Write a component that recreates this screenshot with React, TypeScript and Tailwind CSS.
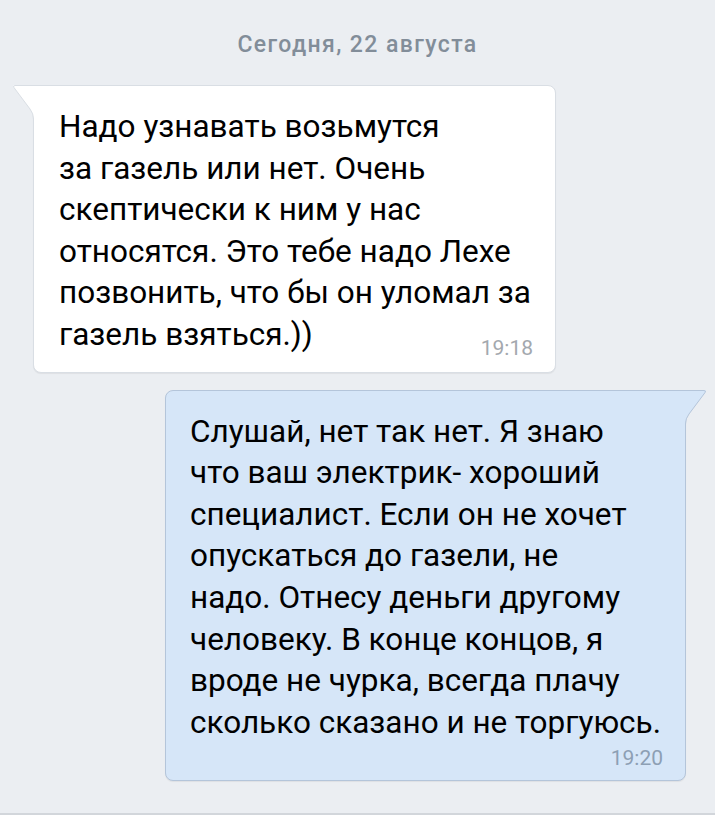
import React from 'react';

type Side = 'in' | 'out';

const Tail: React.FC<{ side: Side }> = ({ side }) => {
  const fill = side === 'in' ? '#ffffff' : '#d6e6f8';
  const stroke = side === 'in' ? '#d9dee4' : '#b4c5da';
  return (
    <svg
      width="26"
      height="34"
      viewBox="0 0 26 34"
      className={
        side === 'in'
          ? 'absolute left-[-22px] top-[-1px]'
          : 'absolute right-[-22px] top-[-1px] -scale-x-100'
      }
    >
      <path d="M26 0 L3 0 Q0 0 1.8 2.4 L18 24 Q21.5 28.5 21.5 34 L26 34 Z" fill={fill} />
      <path
        d="M26 0.5 L3 0.5 Q0.6 0.5 2 2.6 L18 24 Q21.5 28.5 21.5 34"
        fill="none"
        stroke={stroke}
        strokeWidth="1"
      />
    </svg>
  );
};

const lines1 = [
  'Надо узнавать возьмутся',
  'за газель или нет. Очень',
  'скептически к ним у нас',
  'относятся. Это тебе надо Лехе',
  'позвонить, что бы он уломал за',
  'газель взяться.))',
];

const lines2 = [
  'Слушай, нет так нет. Я знаю',
  'что ваш электрик- хороший',
  'специалист. Если он не хочет',
  'опускаться до газели, не',
  'надо. Отнесу деньги другому',
  'человеку. В конце концов, я',
  'вроде не чурка, всегда плачу',
  'сколько сказано и не торгуюсь.',
];

export default function App() {
  return (
    <div className="w-[715px] h-[815px] bg-[#ebeef2] border-b-2 border-[#d2d6db] font-['Roboto',sans-serif] overflow-hidden">
      <div className="pt-[31px] text-center text-[23px] leading-[28px] tracking-[1.4px] font-medium text-[#828d99]">
        Сегодня, 22 августа
      </div>

      {/* incoming */}
      <div className="ml-[33px] mt-[26px] w-[523px] relative bg-white border border-[#d9dee4] rounded-lg rounded-tl-none shadow-[0_1px_1px_rgba(0,0,0,0.06)] pl-[25px] pr-[22px] pt-[20px] pb-[12px]">
        <Tail side="in" />
        <div className="text-[31.5px] leading-[41.6px] text-black whitespace-nowrap">
          {lines1.map((l) => (
            <div key={l}>{l}</div>
          ))}
        </div>
        <div className="-mt-[20px] text-right text-[21px] leading-[24px] text-[#a3a8ae]">19:18</div>
      </div>

      {/* outgoing */}
      <div className="ml-[165px] mt-[17px] w-[521px] relative bg-[#d6e6f8] border border-[#b4c5da] rounded-lg rounded-tr-none shadow-[0_1px_1px_rgba(0,0,0,0.06)] pl-[24px] pr-[22px] pt-[20px] pb-[10px]">
        <Tail side="out" />
        <div className="text-[31.5px] leading-[41.6px] text-black whitespace-nowrap">
          {lines2.map((l) => (
            <div key={l}>{l}</div>
          ))}
        </div>
        <div className="mt-[3px] text-right text-[21px] leading-[24px] text-[#8d9fb4]">19:20</div>
      </div>
    </div>
  );
}
